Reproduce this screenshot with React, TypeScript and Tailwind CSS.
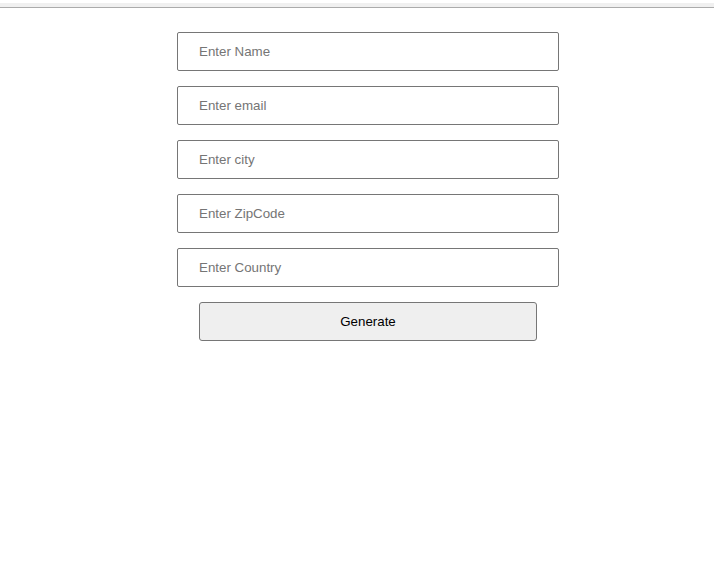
import React, { useState } from "react";

const fields = [
  { key: "name", placeholder: "Enter Name" },
  { key: "email", placeholder: "Enter email" },
  { key: "city", placeholder: "Enter city" },
  { key: "zip", placeholder: "Enter ZipCode" },
  { key: "country", placeholder: "Enter Country" },
];

export default function App() {
  const [values, setValues] = useState<Record<string, string>>({});

  return (
    <div className="min-h-[569px] bg-white font-['Liberation_Sans',Arial,sans-serif]">
      {/* top strip */}
      <div className="h-[9px] pt-[3px]">
        <div className="h-[5px] bg-[#f0f0f0] border-b border-[#ababab]" />
      </div>

      <div className="ml-[177px] mt-[23px] w-[382px] flex flex-col">
        {fields.map((f) => (
          <input
            key={f.key}
            type="text"
            placeholder={f.placeholder}
            value={values[f.key] || ""}
            onChange={(e) => setValues({ ...values, [f.key]: e.target.value })}
            className="h-[39px] mb-[15px] w-full border border-[#767676] rounded-[2px] pl-[21px] text-[13.33px] text-black placeholder:text-[#757575] outline-none"
          />
        ))}
        <button className="mx-[22px] h-[39px] border border-[#767676] rounded-[3px] bg-[#efefef] text-[13.33px] text-black">
          Generate
        </button>
      </div>
    </div>
  );
}
